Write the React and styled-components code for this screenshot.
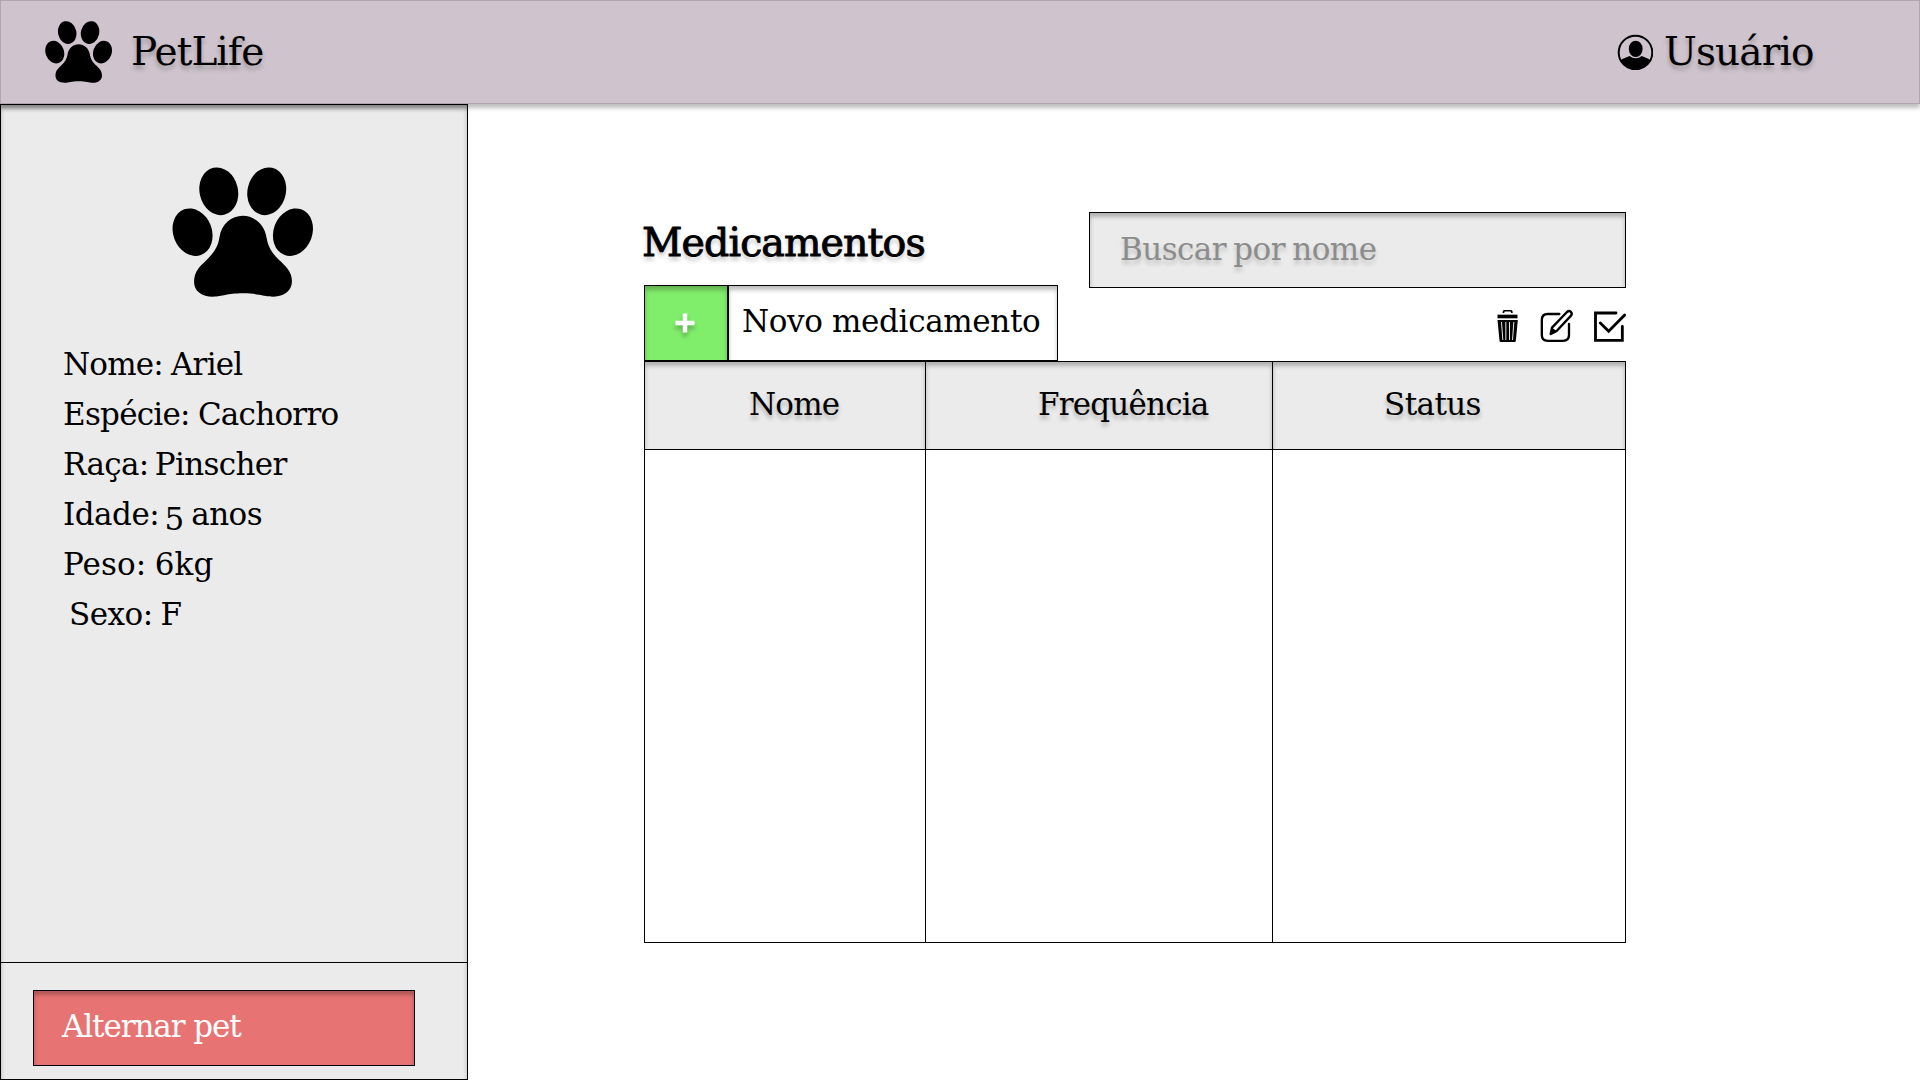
import React from 'react';
import styled, { createGlobalStyle } from 'styled-components';

const GlobalStyle = createGlobalStyle`
  * { box-sizing: border-box; }
  html, body { margin: 0; padding: 0; background: #fff; }
  body { font-family: "DejaVu Serif", "Liberation Serif", serif; color: #000; }
  svg { display: block; flex: none; }
  h1, p, ul { margin: 0; padding: 0; font-weight: 400; }
`;

const drop = '0 4px 4px rgba(0, 0, 0, 0.25)';
const inner = 'inset 0 4px 4px rgba(0, 0, 0, 0.25)';

const Page = styled.div`
  width: 1920px;
  height: 1080px;
  display: flex;
  flex-direction: column;
  overflow: hidden;
`;

const Header = styled.header`
  position: relative;
  z-index: 1;
  flex: none;
  height: 104px;
  display: flex;
  justify-content: space-between;
  padding: 0 0 0 44px;
  background: #cfc4cd;
  border: 1px solid #b3a5b0;
  box-shadow: ${drop};
`;

const Brand = styled.div`
  display: flex;
  gap: 19px;
  padding-top: 20px;
`;

const Account = styled.div`
  display: flex;
  gap: 11px;
  width: 302px;
  padding-top: 33px;
`;

const HeaderText = styled.span`
  font-size: 39px;
  line-height: 60px;
  margin-top: ${(p) => p.$top}px;
  letter-spacing: ${(p) => p.$track}px;
  white-space: nowrap;
  text-shadow: ${drop};
`;

const Body = styled.div`
  flex: 1;
  display: flex;
`;

const Sidebar = styled.aside`
  width: 468px;
  display: flex;
  flex-direction: column;
  background: #ebebeb;
  border: 1px solid #000;
  box-shadow: ${inner};
`;

const Profile = styled.div`
  flex: 1;
  padding: 62px 0 0 62px;
`;

const Portrait = styled.div`
  padding-left: 109px;
`;

const Facts = styled.ul`
  list-style: none;
  margin-top: 42px;
`;

const Fact = styled.li`
  font-size: 31px;
  line-height: 50px;
  white-space: nowrap;
  padding-left: ${(p) => p.$indent || 0}px;
  letter-spacing: ${(p) => p.$track || 0}px;
  word-spacing: ${(p) => p.$gap ?? -3}px;
`;

const LowFigure = styled.span`
  display: inline-block;
  line-height: 1;
  transform: translate(-1px, 5px);
`;

const SidebarFooter = styled.div`
  height: 117px;
  padding: 27px 0 0 32px;
  border-top: 1px solid #000;
`;

const SwitchButton = styled.button`
  display: block;
  width: 382px;
  height: 76px;
  padding: 0 0 4px 28px;
  border: 1px solid #000;
  background: #e87373;
  box-shadow: ${inner};
  color: #fff;
  font: 31px/70px "DejaVu Serif", serif;
  letter-spacing: -1.1px;
  text-align: left;
`;

const Main = styled.main`
  width: 982px;
  margin: 108px 0 0 176px;
`;

const TopArea = styled.div`
  display: flex;
  justify-content: space-between;
  height: 149px;
`;

const TitleColumn = styled.div`
  display: flex;
  flex-direction: column;
  justify-content: space-between;
`;

const Title = styled.h1`
  font-size: 39.5px;
  line-height: 61px;
  margin-left: -2px;
  letter-spacing: -0.9px;
  -webkit-text-stroke: 0.9px #000;
  text-shadow: ${drop};
`;

const NewEntry = styled.div`
  display: flex;
  height: 76px;
`;

const AddButton = styled.button`
  width: 84px;
  display: flex;
  align-items: center;
  justify-content: center;
  padding: 0 2px 0 0;
  border: 1px solid #000;
  background: #80ed6b;
  box-shadow: ${inner};
  svg { filter: drop-shadow(0 4px 2px rgba(0, 0, 0, 0.25)); }
`;

const NewLabel = styled.div`
  width: 330px;
  padding-left: 13px;
  border: 1px solid #000;
  box-shadow: ${inner};
  font-size: 31px;
  letter-spacing: -0.35px;
  line-height: 70px;
  white-space: nowrap;
`;

const ToolColumn = styled.div`
  display: flex;
  flex-direction: column;
  align-items: flex-end;
`;

const Search = styled.div`
  width: 537px;
  height: 76px;
  padding-left: 30px;
  border: 1px solid #000;
  background: #ebebeb;
  box-shadow: ${inner};
  color: #8c8c8c;
  font-size: 31px;
  letter-spacing: -0.55px;
  line-height: 73px;
  word-spacing: -2px;
  text-shadow: 0 4px 4px rgba(0, 0, 0, 0.18);
`;

const Actions = styled.div`
  display: grid;
  grid-template-columns: 21px 32px 32px;
  align-items: center;
  column-gap: 22px;
  margin-top: 22px;
`;

const Table = styled.div`
  display: grid;
  grid-template-columns: 281px 347px 353px;
  grid-template-rows: 88px 493px;
  height: 582px;
  border-bottom: 1px solid #000;
  border-right: 1px solid #000;
`;

const HeadCell = styled.div`
  padding-left: ${(p) => p.$left}px;
  border-top: 1px solid #000;
  border-left: 1px solid #000;
  background: #ebebeb;
  box-shadow: ${inner};
  font-size: 31px;
  line-height: 85px;
  letter-spacing: ${(p) => p.$track ?? -0.8}px;
  text-shadow: ${drop};
`;

const Cell = styled.div`
  border-top: 1px solid #000;
  border-left: 1px solid #000;
`;

const Paw = ({ width, height }) => (
  <svg width={width} height={height} viewBox="98 80 422 391" preserveAspectRatio="none">
    <ellipse cx="238" cy="153" rx="57.5" ry="72.5" transform="rotate(-13 238 153)" />
    <ellipse cx="381.5" cy="153" rx="57.5" ry="72.5" transform="rotate(13 381.5 153)" />
    <ellipse cx="159.5" cy="276" rx="58" ry="73" transform="rotate(-20 159.5 276)" />
    <ellipse cx="460" cy="276" rx="58" ry="73" transform="rotate(20 460 276)" />
    <path d="M310 227C276 227 246 252 240 291C236 319 223 338 203 358C183 378 164 392 164 426C164 454 188 470 220 470C251 470 261 460 310 460C359 460 371 470 402 470C433 470 457 453 457 424C457 393 437 377 417 358C397 338 386 322 381 293C375 253 344 227 310 227Z" />
  </svg>
);

const UserIcon = () => (
  <svg width="36" height="36" viewBox="0 0 36 36">
    <circle cx="18.5" cy="18.5" r="16.8" fill="none" stroke="#000" strokeWidth="2" />
    <ellipse cx="18.7" cy="14.9" rx="6.9" ry="8.2" />
    <path d="M3.500 26.300C6.500 24.100 10.500 23.300 12.800 22.100C16 25 21.300 25 24.500 22.100C27 23.300 30.500 24.100 33.500 26.300C30.500 32 24.500 35.500 18.500 35.500C12 35.500 6.500 32 3.500 26.300Z" />
  </svg>
);

const PlusIcon = () => (
  <svg width="20" height="20" viewBox="0 0 20 20">
    <path d="M10 0.500V19.500M0.500 10H19.500" stroke="#fff" strokeWidth="4.500" />
  </svg>
);

const TrashIcon = () => (
  <svg width="21" height="32" viewBox="53 45 62 96">
    <path d="M72 54V51Q72 47 77 47H92Q97 47 97 51V54" fill="none" stroke="#000" strokeWidth="5" />
    <path d="M54 59H114V70H54Z" />
    <path d="M54 75H115L109 137Q109 141 105 141H64Q60 141 60 137Z" />
    <path d="M66 81L70 135M79 81V135M90 81V135M103 81L99 135" stroke="#fff" strokeWidth="2.700" />
  </svg>
);

const EditIcon = () => (
  <svg width="32" height="32" viewBox="181 45 96 96" overflow="visible" fill="none" stroke="#000" strokeWidth="7" strokeLinecap="round" strokeLinejoin="round">
    <path d="M239 57H204Q186.500 57 186.500 75V120Q186.500 137.500 204 137.500H250Q268 137.500 268 120V87" />
    <path d="M213 117L217 98L262 51Q268 46 273 50Q279 56 274 62L231 108Z" />
    <path d="M218 101L229 109L214 116Z" fill="#000" strokeWidth="4" />
  </svg>
);

const CheckIcon = () => (
  <svg width="32" height="31" viewBox="342 46 96 93" fill="none" stroke="#000" strokeWidth="8.500" strokeLinecap="round">
    <path d="M408 52H346.500V134H427V92" />
    <path d="M361 82L386 107L434 58" />
  </svg>
);

export default function App() {
  return (
    <>
      <GlobalStyle />
      <Page>
        <Header>
          <Brand>
            <Paw width={67} height={62} />
            <HeaderText $top={1} $track={-0.95}>PetLife</HeaderText>
          </Brand>
          <Account>
            <UserIcon />
            <HeaderText $top={-12} $track={-0.9}>Usuário</HeaderText>
          </Account>
        </Header>
        <Body>
          <Sidebar>
            <Profile>
              <Portrait>
                <Paw width={141} height={130} />
              </Portrait>
              <Facts>
                <Fact $track={-0.8} $gap={-1}>Nome: Ariel</Fact>
                <Fact $track={-0.75} $gap={-1}>Espécie: Cachorro</Fact>
                <Fact $track={-0.65}>Raça: Pinscher</Fact>
                <Fact $track={-0.5}>Idade: <LowFigure>5</LowFigure> anos</Fact>
                <Fact $track={0.1} $gap={-1.5}>Peso: 6kg</Fact>
                <Fact $indent={6} $track={-0.5} $gap={-1.5}>Sexo: F</Fact>
              </Facts>
            </Profile>
            <SidebarFooter>
              <SwitchButton>Alternar pet</SwitchButton>
            </SidebarFooter>
          </Sidebar>
          <Main>
            <TopArea>
              <TitleColumn>
                <Title>Medicamentos</Title>
                <NewEntry>
                  <AddButton aria-label="Adicionar"><PlusIcon /></AddButton>
                  <NewLabel>Novo medicamento</NewLabel>
                </NewEntry>
              </TitleColumn>
              <ToolColumn>
                <Search>Buscar por nome</Search>
                <Actions>
                  <TrashIcon />
                  <EditIcon />
                  <CheckIcon />
                </Actions>
              </ToolColumn>
            </TopArea>
            <Table>
              <HeadCell $left={104}>Nome</HeadCell>
              <HeadCell $left={112}>Frequência</HeadCell>
              <HeadCell $left={111} $track={-0.6}>Status</HeadCell>
              <Cell />
              <Cell />
              <Cell />
            </Table>
          </Main>
        </Body>
      </Page>
    </>
  );
}
